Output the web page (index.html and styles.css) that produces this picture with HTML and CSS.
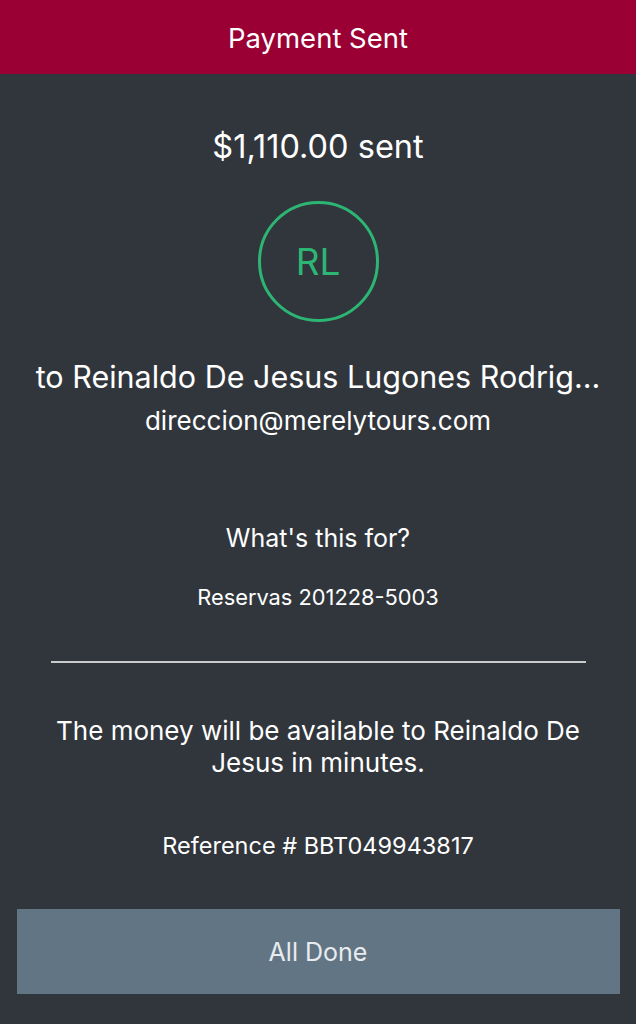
FILE: index.html
```html
<!DOCTYPE html>
<html lang="en">
<head>
    <meta charset="UTF-8">
    <meta name="viewport" content="width=device-width, initial-scale=1.0">
    <title>Payment Sent</title>
    <link rel="stylesheet" href="styles.css">
</head>
<body>
    <div class="header">Payment Sent</div>

    <div class="content">
        <div class="amount">$1,110.00 sent</div>
        <div class="avatar">RL</div>
        <div class="recipient">to Reinaldo De Jesus Lugones Rodrig...</div>
        <div class="email">direccion@merelytours.com</div>

        <div class="memo-label">What's this for?</div>
        <div class="memo">Reservas 201228-5003</div>

        <hr class="divider">

        <p class="notice">The money will be available to Reinaldo De Jesus in minutes.</p>
        <div class="reference">Reference # BBT049943817</div>

        <button class="done">All Done</button>
    </div>
</body>
</html>
```

FILE: styles.css
```css
body {
    margin: 0;
    font-family: Inter, "Noto Sans", sans-serif;
    background: #31363c;
    color: #ffffff;
    min-height: 100vh;
}
.header {
    height: 74px;
    background: #9a0033;
    display: flex;
    align-items: center;
    justify-content: center;
    font-size: 27.5px;
    padding-top: 1px;
    box-sizing: border-box;
}
.content {
    display: flex;
    flex-direction: column;
    align-items: center;
    text-align: center;
    padding: 0 16px;
}
.amount {
    margin-top: 54px;
    font-size: 32.5px;
    line-height: 38px;
}
.avatar {
    margin-top: 35px;
    width: 115px;
    height: 115px;
    border: 3px solid #2db574;
    border-radius: 50%;
    color: #2db574;
    font-size: 37px;
    display: flex;
    align-items: center;
    justify-content: center;
}
.recipient {
    margin-top: 36px;
    font-size: 30.5px;
    line-height: 38px;
    white-space: nowrap;
}
.email {
    margin-top: 9px;
    font-size: 26px;
    line-height: 32px;
}
.memo-label {
    margin-top: 86px;
    font-size: 25px;
    line-height: 30px;
}
.memo {
    margin-top: 31px;
    font-size: 21.8px;
    line-height: 26px;
}
.divider {
    width: 535px;
    margin: 51px 0 0;
    border: 0;
    border-top: 2px solid #c9cbcd;
}
.notice {
    margin: 52px 0 0;
    font-size: 26px;
    line-height: 32px;
    width: 560px;
}
.reference {
    margin-top: 53px;
    font-size: 23.5px;
    line-height: 28px;
}
.done {
    margin-top: 49px;
    width: 603px;
    height: 85px;
    border: none;
    background: #627585;
    color: #e8ecef;
    font-family: inherit;
    font-size: 25px;
}
```
